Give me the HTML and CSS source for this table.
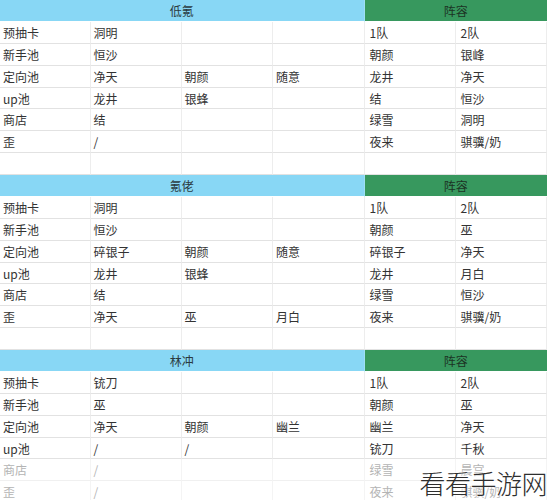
FILE: index.html
```html
<!DOCTYPE html>
<html lang="zh">
<head>
<meta charset="utf-8">
<link rel="stylesheet" href="styles.css">
</head>
<body>
<div class="sheet">
  <div class="cell hd blue span4">低氪</div><div class="cell hd green span2">阵容</div>
  <div class="cell">预抽卡</div><div class="cell">洞明</div><div class="cell"></div><div class="cell"></div><div class="cell r">1队</div><div class="cell r">2队</div>
  <div class="cell">新手池</div><div class="cell">恒沙</div><div class="cell"></div><div class="cell"></div><div class="cell r">朝颜</div><div class="cell r">银峰</div>
  <div class="cell">定向池</div><div class="cell">净天</div><div class="cell">朝颜</div><div class="cell">随意</div><div class="cell r">龙井</div><div class="cell r">净天</div>
  <div class="cell">up池</div><div class="cell">龙井</div><div class="cell">银蜂</div><div class="cell"></div><div class="cell r">结</div><div class="cell r">恒沙</div>
  <div class="cell">商店</div><div class="cell">结</div><div class="cell"></div><div class="cell"></div><div class="cell r">绿雪</div><div class="cell r">洞明</div>
  <div class="cell">歪</div><div class="cell">/</div><div class="cell"></div><div class="cell"></div><div class="cell r">夜来</div><div class="cell r">骐骥/奶</div>
  <div class="cell"></div><div class="cell"></div><div class="cell"></div><div class="cell"></div><div class="cell r"></div><div class="cell r"></div>

  <div class="cell hd blue span4">氪佬</div><div class="cell hd green span2">阵容</div>
  <div class="cell">预抽卡</div><div class="cell">洞明</div><div class="cell"></div><div class="cell"></div><div class="cell r">1队</div><div class="cell r">2队</div>
  <div class="cell">新手池</div><div class="cell">恒沙</div><div class="cell"></div><div class="cell"></div><div class="cell r">朝颜</div><div class="cell r">巫</div>
  <div class="cell">定向池</div><div class="cell">碎银子</div><div class="cell">朝颜</div><div class="cell">随意</div><div class="cell r">碎银子</div><div class="cell r">净天</div>
  <div class="cell">up池</div><div class="cell">龙井</div><div class="cell">银蜂</div><div class="cell"></div><div class="cell r">龙井</div><div class="cell r">月白</div>
  <div class="cell">商店</div><div class="cell">结</div><div class="cell"></div><div class="cell"></div><div class="cell r">绿雪</div><div class="cell r">恒沙</div>
  <div class="cell">歪</div><div class="cell">净天</div><div class="cell">巫</div><div class="cell">月白</div><div class="cell r">夜来</div><div class="cell r">骐骥/奶</div>
  <div class="cell"></div><div class="cell"></div><div class="cell"></div><div class="cell"></div><div class="cell r"></div><div class="cell r"></div>

  <div class="cell hd blue span4">林冲</div><div class="cell hd green span2">阵容</div>
  <div class="cell">预抽卡</div><div class="cell">铳刀</div><div class="cell"></div><div class="cell"></div><div class="cell r">1队</div><div class="cell r">2队</div>
  <div class="cell">新手池</div><div class="cell">巫</div><div class="cell"></div><div class="cell"></div><div class="cell r">朝颜</div><div class="cell r">巫</div>
  <div class="cell">定向池</div><div class="cell">净天</div><div class="cell">朝颜</div><div class="cell">幽兰</div><div class="cell r">幽兰</div><div class="cell r">净天</div>
  <div class="cell">up池</div><div class="cell">/</div><div class="cell">/</div><div class="cell"></div><div class="cell r">铳刀</div><div class="cell r">千秋</div>
  <div class="cell fade">商店</div><div class="cell fade">/</div><div class="cell fade"></div><div class="cell fade"></div><div class="cell r fade">绿雪</div><div class="cell r fade">晨宫</div>
  <div class="cell fade">歪</div><div class="cell fade">/</div><div class="cell fade"></div><div class="cell fade"></div><div class="cell r fade">夜来</div><div class="cell r fade">骐骥/奶</div>
</div>
<div class="watermark">看看手游网</div>
</body>
</html>
```

FILE: styles.css
```css
html, body {
  margin: 0;
  padding: 0;
  background: #ffffff;
  overflow: hidden;
}
body {
  width: 547px;
  height: 500px;
  position: relative;
  font-family: "Noto Sans CJK SC", "Noto Sans", sans-serif;
  font-size: 12px;
  color: #333333;
}
.sheet {
  display: grid;
  grid-template-columns: 90.5px 91px 91.5px 91.5px 91px 91.5px;
  grid-auto-rows: 21.875px;
  width: 547px;
}
.cell {
  box-sizing: border-box;
  border-bottom: 1px solid #e2e2e2;
  border-right: 1px solid #ededed;
  padding-left: 3px;
  line-height: 21px;
  white-space: nowrap;
  overflow: hidden;
}
.cell.r {
  padding-left: 5px;
}
.hd {
  text-align: center;
  padding-left: 0;
  border-bottom: 1px solid #ffffff;
}
.blue {
  background: #88d7f5;
  color: #2a3a40;
  border-right: 1px solid #9fdff5;
}
.green {
  background: #37985e;
  color: #1c3324;
  border-right: none;
}
.span4 { grid-column: span 4; }
.span2 { grid-column: span 2; }
.fade {
  color: #b4b4b4;
  border-bottom-color: #f0f0f0;
  border-right-color: #f4f4f4;
}
.watermark {
  position: absolute;
  right: 0;
  bottom: 2px;
  font-family: "Noto Sans CJK SC", sans-serif;
  font-weight: 300;
  font-size: 26px;
  line-height: 30px;
  letter-spacing: -0.5px;
  color: #2e2e2e;
  text-shadow: 0 0 2px #ffffff, 0 0 2px #ffffff, 0 0 3px #ffffff;
}
```
